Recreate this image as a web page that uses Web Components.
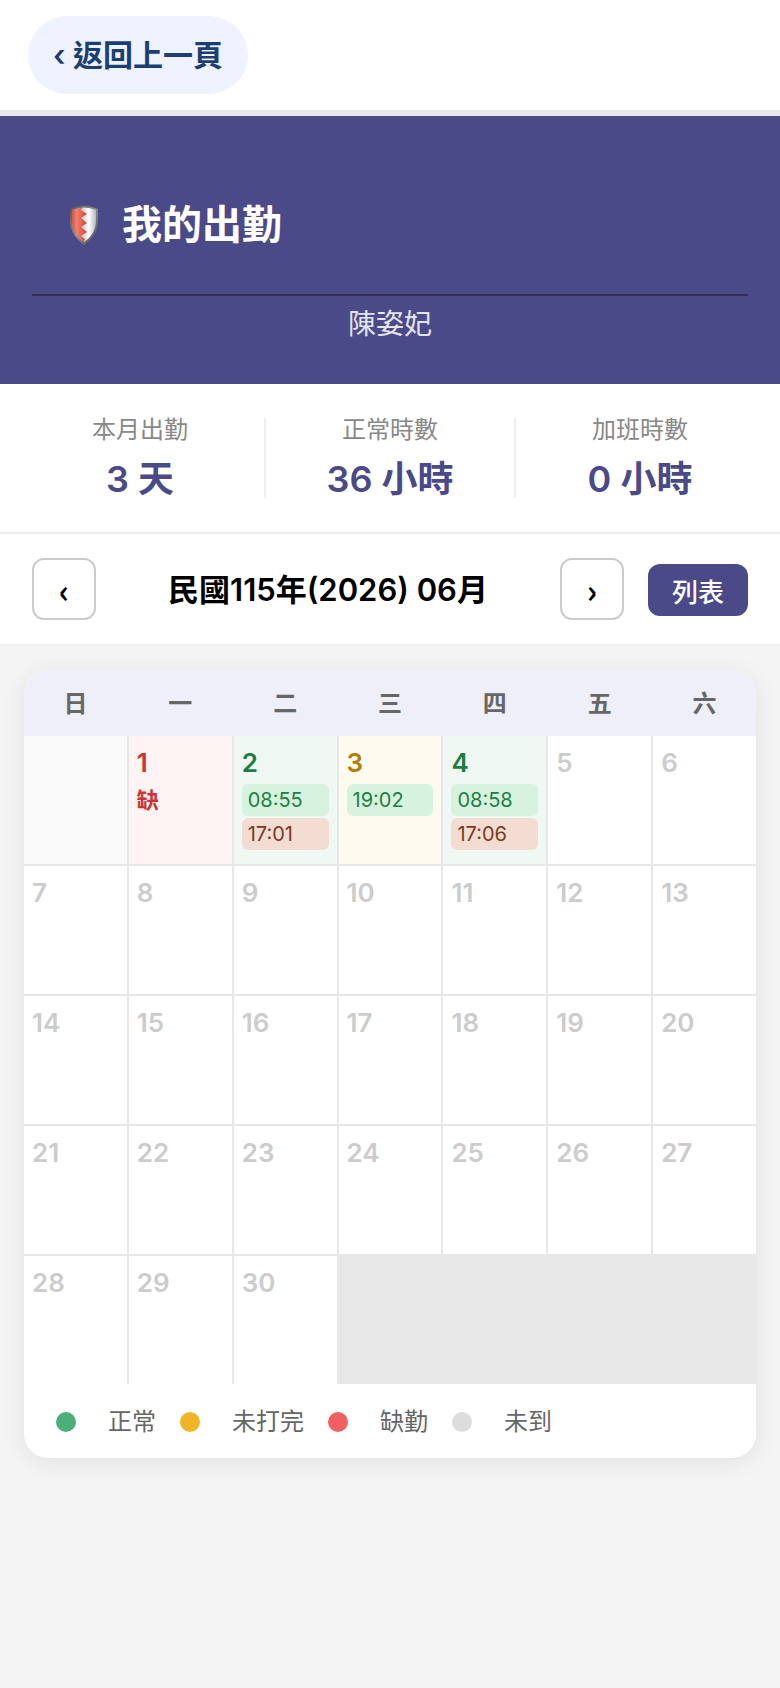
<!DOCTYPE html>
<html lang="zh-Hant">
<head>
<meta charset="utf-8">
<meta name="viewport" content="width=device-width, initial-scale=1">
<title>我的出勤</title>
<style>
html { background: #f4f4f4; }
body { margin: 0; font-family: Inter, "Noto Sans CJK TC", sans-serif; color: #000; --brand: #4b4a88; }
</style>
</head>
<body>
<attendance-page></attendance-page>
<script>
const define = (name, html, setup) => {
  const template = document.createElement("template");
  template.innerHTML = html;
  customElements.define(name, class extends HTMLElement {
    constructor() {
      super();
      this.attachShadow({ mode: "open" }).append(template.content.cloneNode(true));
    }
    connectedCallback() { if (setup) setup(this, this.shadowRoot); }
  });
};

define("back-bar", `
<style>
:host { display: flex; padding: 16px 28px; background: #fff; border-bottom: 6px solid #e7e7e7; }
a { display: block; padding: 0 25px; line-height: 78px; border-radius: 39px; background: #eef3ff; color: #1c3f73; font-size: 30px; font-weight: 600; text-decoration: none; }
</style>
<a href="#"><slot></slot></a>`);

define("shield-logo", `
<style>:host { display: block; width: 28px; height: 40px; } svg { display: block; width: 100%; height: 100%; }</style>
<svg viewBox="0 0 28 40" aria-hidden="true">
<defs>
<linearGradient id="rim" x1="0" y1="0" x2="1" y2="1"><stop offset="0" stop-color="#555"/><stop offset=".5" stop-color="#8b8b8b"/><stop offset="1" stop-color="#4c4c50"/></linearGradient>
<linearGradient id="red" x1="0" y1="0" x2="1" y2="0"><stop offset="0" stop-color="#d8503e"/><stop offset=".3" stop-color="#f0806c"/><stop offset="1" stop-color="#d04432"/></linearGradient>
<linearGradient id="white" x1="0" y1="0" x2="1" y2="0"><stop offset=".3" stop-color="#b0b0b4"/><stop offset=".7" stop-color="#fff"/><stop offset="1" stop-color="#b4b8bc"/></linearGradient>
</defs>
<path d="M0 4Q14-3 28 4V16C28 27 21 35 14 40C7 35 0 27 0 16Z" fill="url(#rim)"/>
<path d="M2 5Q14 0 26 5V16C26 26 20 33 14 37C8 33 2 26 2 16Z" fill="url(#white)"/>
<path d="M2 5Q7 3 12 3L11 5L17 9L11 13L17 18L11 22L17 27L11 31L15 34L14 37C8 33 2 26 2 16Z" fill="url(#red)"/>
</svg>`);

define("page-banner", `
<style>
:host { display: block; padding: 56px 32px 40px; background: var(--brand); color: #fff; }
.title { display: flex; align-items: center; gap: 24px; padding: 0 38px 16px; height: 106px; border-bottom: 2px solid #302f50; }
h1 { margin: 0; font-size: 40px; line-height: 60px; font-weight: 600; }
p { margin: 8px 0 0; font-size: 28px; line-height: 40px; text-align: center; color: #e4e4ee; }
</style>
<div class="title"><shield-logo></shield-logo><h1><slot></slot></h1></div>
<p><slot name="person"></slot></p>`);

define("stat-item", `
<style>
:host { display: block; flex: 1 1 0; text-align: center; border-right: 2px solid #eee; }
:host(:last-child) { border-right: 0; }
.label { font-size: 24px; line-height: 24px; color: #888; }
.value { margin-top: 18px; font-size: 36px; line-height: 38px; font-weight: 600; color: var(--brand); }
</style>
<div class="label"><slot name="label"></slot></div>
<div class="value"><slot></slot></div>`);

define("stat-row", `
<style>:host { display: flex; padding: 34px 16px; background: #fff; border-bottom: 2px solid #eee; }</style>
<slot></slot>`);

define("month-nav", `
<style>
:host { display: flex; align-items: center; padding: 24px 32px; background: #fff; border-bottom: 2px solid #eee; }
button { font-family: inherit; margin: 0; padding: 0; box-sizing: border-box; }
.step { width: 64px; height: 62px; border: 2px solid #ccc; border-radius: 12px; background: #fff; color: #000; font-family: "Noto Sans CJK TC", sans-serif; font-size: 32px; line-height: 32px; font-weight: 700; }
.list { width: 100px; height: 52px; margin: 2px 0 0 24px; border: 0; border-radius: 12px; background: var(--brand); color: #fff; font-size: 26px; font-weight: 500; }
h2 { flex: 1; margin: 0; padding-top: 2px; text-align: center; font-size: 31px; line-height: 44px; font-weight: 600; }
</style>
<button class="step" aria-label="上個月">‹</button>
<h2><slot></slot></h2>
<button class="step" aria-label="下個月">›</button>
<button class="list">列表</button>`);

define("time-chip", `
<style>
:host { display: block; margin-bottom: 2px; padding: 0 6px; border-radius: 6px; font-size: 20px; line-height: 32px; background: #d6f3df; color: #1f7f42; }
:host([kind="out"]) { background: #f3ddd3; color: #7c3a1c; }
</style>
<slot></slot>`);

define("day-cell", `
<style>
:host { display: block; box-sizing: border-box; height: 128px; padding: 12px 8px 8px; background: #fff; color: #ccc; }
:host([state="blank"]) { background: #fafafa; }
:host([state="absent"]) { background: #fff4f4; color: #cc3333; }
:host([state="ok"]) { background: #eff8f3; color: #1b7d3f; }
:host([state="partial"]) { background: #fffaef; color: #b27c05; }
.num { min-height: 30px; margin-bottom: 6px; font-size: 26px; line-height: 30px; font-weight: 600; }
.body { font-size: 22px; line-height: 32px; font-weight: 700; }
.body ::slotted(time-chip) { font-weight: 400; }
</style>
<div class="num"></div><div class="body"><slot></slot></div>`, (host, root) => {
  root.querySelector(".num").textContent = host.getAttribute("day") || "";
});

define("month-grid", `
<style>
:host { display: block; }
.week, .days { display: grid; grid-template-columns: repeat(7, minmax(0, 1fr)); column-gap: 2px; }
.week { padding-top: 2px; background: #efeff9; color: #666; font-size: 24px; line-height: 64px; font-weight: 600; text-align: center; }
.days { row-gap: 2px; background: #e7e7e7; }
</style>
<div class="week"><span>日</span><span>一</span><span>二</span><span>三</span><span>四</span><span>五</span><span>六</span></div>
<div class="days"></div>`, (host, root) => {
  const days = root.querySelector(".days");
  const records = {
    1: ["absent", "缺"],
    2: ["ok", "<time-chip>08:55</time-chip><time-chip kind='out'>17:01</time-chip>"],
    3: ["partial", "<time-chip>19:02</time-chip>"],
    4: ["ok", "<time-chip>08:58</time-chip><time-chip kind='out'>17:06</time-chip>"]
  };
  let html = "<day-cell state='blank'></day-cell>";
  for (let d = 1; d <= 30; d++) {
    const [state, content] = records[d] || ["future", ""];
    html += `<day-cell day="${d}" state="${state}">${content}</day-cell>`;
  }
  days.innerHTML = html;
});

define("legend-item", `
<style>
:host { display: flex; align-items: center; gap: 32px; }
i { width: 20px; height: 20px; border-radius: 50%; background: var(--dot); }
</style>
<i></i><span><slot></slot></span>`);

define("calendar-card", `
<style>
:host { display: block; margin: 24px; border-radius: 24px; overflow: hidden; background: #fff; box-shadow: 0 4px 24px rgba(0, 0, 0, .08); }
.legend { display: flex; flex-wrap: wrap; gap: 24px; padding: 20px 32px 18px; font-size: 24px; line-height: 36px; color: #666; }
</style>
<month-grid></month-grid>
<div class="legend"><slot></slot></div>`);

define("attendance-page", `
<style>
:host { display: block; }
.green { --dot: #4caf7a; } .amber { --dot: #f0b429; } .red { --dot: #f06060; } .gray { --dot: #ddd; }
</style>
<back-bar>‹ 返回上一頁</back-bar>
<page-banner>我的出勤<span slot="person">陳姿妃</span></page-banner>
<stat-row>
<stat-item><span slot="label">本月出勤</span>3 天</stat-item>
<stat-item><span slot="label">正常時數</span>36 小時</stat-item>
<stat-item><span slot="label">加班時數</span>0 小時</stat-item>
</stat-row>
<month-nav>民國115年(2026) 06月</month-nav>
<calendar-card>
<legend-item class="green">正常</legend-item>
<legend-item class="amber">未打完</legend-item>
<legend-item class="red">缺勤</legend-item>
<legend-item class="gray">未到</legend-item>
</calendar-card>`);
</script>
</body>
</html>
